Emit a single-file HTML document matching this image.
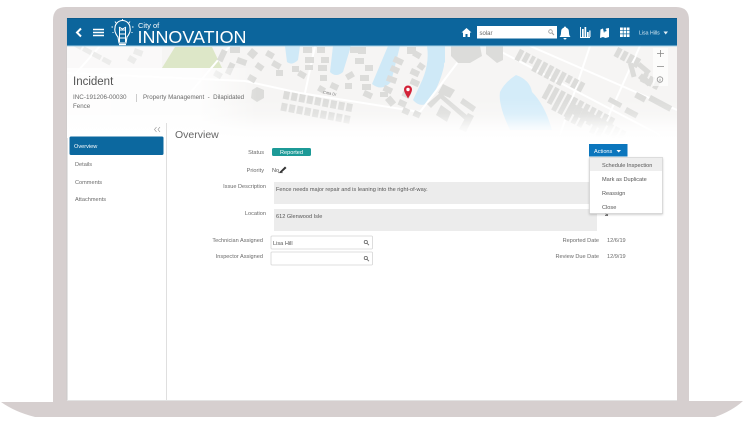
<!DOCTYPE html>
<html><head><meta charset="utf-8">
<style>
html,body{margin:0;padding:0;background:#fff}
#r{position:relative;width:743px;height:427px;overflow:hidden;background:#fff;font-family:"Liberation Sans",sans-serif;color:#6a6a6a}
#r div.t{position:absolute;font-size:5.6px;line-height:8px;margin-top:1px;white-space:nowrap;filter:blur(.3px)}
.ra{text-align:right;width:100px}
.box{position:absolute}
</style></head><body><div id="r">
<svg width="743" height="427" style="position:absolute;left:0;top:0;filter:blur(.3px)" xmlns="http://www.w3.org/2000/svg">
<defs>
<linearGradient id="fade" x1="0" y1="0" x2="0" y2="1"><stop offset="0" stop-color="#fff" stop-opacity="0"/><stop offset=".4" stop-color="#fff" stop-opacity=".2"/><stop offset=".75" stop-color="#fff" stop-opacity=".8"/><stop offset="1" stop-color="#fff"/></linearGradient>
<linearGradient id="lf" x1="0" y1="0" x2="1" y2="0"><stop offset="0" stop-color="#fff" stop-opacity=".85"/><stop offset=".7" stop-color="#fff" stop-opacity=".8"/><stop offset="1" stop-color="#fff" stop-opacity="0"/></linearGradient>
<clipPath id="sc"><rect x="67" y="46" width="610" height="92"/></clipPath>
</defs>
<!-- laptop -->
<path d="M1 402H53V20Q53 7 66 7H676Q689 7 689 20V401H743Q732 411 715 417H35Q15 412 1 402Z" fill="#d6cfcf"/>
<rect x="67" y="18" width="610" height="382" fill="#fff"/>
<rect x="66.500" y="18" width="1" height="382" fill="#c9c9c9"/>
<rect x="67" y="400" width="610" height="1" fill="#e3e3e3"/>
<!-- map -->
<g clip-path="url(#sc)">
<rect x="67" y="46" width="610" height="92" fill="#f6f5f4"/>
<path d="M175 47H212L222 68H162Z" fill="#dde7c8"/>
<g fill="#cfe9f7">
<path d="M285 46H300L298 60Q292 66 287 62Z"/>
<path d="M333 46H351L343 72Q336 78 330 72Z"/>
<path d="M388 46H400L391 82Q382 92 372 84Z"/>
<path d="M427 46H444V66Q440 85 428 103Q420 108 413 100L420 85Q430 65 427 46Z"/>
<path d="M516 75Q530 80 532 92Q545 105 552 130L510 130Q498 105 500 92Q505 82 516 75Z" fill="#d4ecf9"/>
<path d="M440 46H445V62L440 70Z"/>
</g>
<g stroke="#fff" stroke-width="2" fill="none">
<path d="M67 73L245 81L300 93L420 112M230 46L190 93M315 46L305 93M490 46L660 135M530 46L677 110M470 46L420 112M590 46L560 135M640 46L600 135M100 46L70 80"/>
</g>
<g fill="#dcdcda">
<g transform="rotate(28 90 55)"><rect x="70" y="50" width="9" height="5"/><rect x="81" y="50" width="9" height="5"/><rect x="92" y="50" width="9" height="5"/><rect x="103" y="50" width="9" height="5"/></g>
<rect x="130" y="55" width="8" height="6" transform="rotate(30 130 55)"/><rect x="135" y="48" width="9" height="6" transform="rotate(20 135 48)"/>
<rect x="222" y="49" width="6" height="12" transform="rotate(25 222 49)"/><rect x="230" y="62" width="6" height="12" transform="rotate(25 230 62)"/><rect x="216" y="70" width="8" height="6" transform="rotate(30 216 70)"/><rect x="230" y="47" width="10" height="6"/><rect x="238" y="57" width="10" height="6" transform="rotate(20 238 57)"/><rect x="252" y="48" width="8" height="8" transform="rotate(40 252 48)"/><rect x="258" y="62" width="8" height="6" transform="rotate(35 258 62)"/><rect x="250" y="74" width="8" height="6" transform="rotate(30 250 74)"/>
<rect x="268" y="50" width="8" height="6" transform="rotate(30 268 50)"/><rect x="274" y="60" width="9" height="6" transform="rotate(30 274 60)"/><rect x="276" y="70" width="7" height="6"/><rect x="292" y="66" width="7" height="6"/><rect x="300" y="70" width="8" height="6" transform="rotate(30 300 70)"/><rect x="303" y="47" width="9" height="6"/><rect x="305" y="57" width="9" height="6"/><rect x="305" y="65" width="8" height="5"/>
<rect x="317" y="47" width="8" height="6"/><rect x="321" y="57" width="8" height="6"/><rect x="318" y="65" width="9" height="6"/><rect x="320" y="75" width="7" height="6"/><rect x="320" y="85" width="7" height="6" transform="rotate(30 320 85)"/><rect x="332" y="82" width="8" height="6" transform="rotate(25 332 82)"/><rect x="345" y="83" width="7" height="6"/><rect x="345" y="75" width="8" height="6" transform="rotate(-30 345 75)"/><rect x="350" y="47" width="8" height="6"/><rect x="355" y="58" width="9" height="6"/><rect x="358" y="47" width="8" height="7"/><rect x="365" y="65" width="8" height="6"/>
<rect x="360" y="75" width="9" height="6"/><rect x="362" y="84" width="9" height="6"/><rect x="365" y="90" width="9" height="6" transform="rotate(25 365 90)"/><rect x="380" y="92" width="8" height="5"/><rect x="385" y="100" width="7" height="9" transform="rotate(-40 385 100)"/><rect x="407" y="47" width="9" height="7"/><rect x="395" y="56" width="10" height="6" transform="rotate(25 395 56)"/><rect x="392" y="65" width="9" height="6" transform="rotate(25 392 65)"/><rect x="388" y="75" width="10" height="6" transform="rotate(20 388 75)"/><rect x="385" y="85" width="9" height="6" transform="rotate(25 385 85)"/><rect x="415" y="50" width="8" height="6" transform="rotate(30 415 50)"/><rect x="420" y="62" width="7" height="6" transform="rotate(35 420 62)"/><rect x="412" y="68" width="9" height="6" transform="rotate(25 412 68)"/><rect x="412" y="78" width="9" height="6" transform="rotate(25 412 78)"/><rect x="404" y="90" width="8" height="6" transform="rotate(25 404 90)"/><rect x="400" y="99" width="8" height="6" transform="rotate(25 400 99)"/><rect x="404" y="107" width="7" height="6" transform="rotate(25 404 107)"/><rect x="415" y="110" width="7" height="6" transform="rotate(25 415 110)"/>
<path d="M257 87L264 90V98L257 102L251 98L252 90Z"/>
<g transform="rotate(11 285 92)"><rect x="284" y="91" width="6" height="8"/><rect x="292" y="91" width="6" height="8"/><rect x="300" y="91" width="6" height="8"/><rect x="308" y="91" width="6" height="8"/><rect x="316" y="91" width="6" height="8"/><rect x="324" y="91" width="6" height="8"/><rect x="332" y="91" width="6" height="8"/><rect x="340" y="91" width="6" height="8"/><rect x="348" y="91" width="6" height="8"/><rect x="284" y="103" width="6" height="8"/><rect x="292" y="103" width="6" height="8"/><rect x="300" y="103" width="6" height="8"/><rect x="308" y="103" width="6" height="8"/><rect x="316" y="103" width="6" height="8"/><rect x="324" y="103" width="6" height="8"/><rect x="332" y="103" width="6" height="8"/><rect x="340" y="103" width="6" height="8"/><rect x="348" y="103" width="6" height="8"/></g>
<path d="M451 46H480L482 56L470 63H458L451 56Z"/><path d="M486 46H503V60L497 63L486 54Z"/>
<path d="M443 84L455 90L450 98L438 93Z"/><path d="M427 104L441 92L444 95L431 108Z"/><path d="M440 98L443 95L468 116L465 120Z"/><path d="M463 98L476 107L473 112L460 103Z"/><path d="M441 105L451 112L447 122L436 115Z"/><path d="M468 113L474 116L466 132L459 129Z"/>
<g transform="rotate(28 510 57)"><rect x="515" y="45" width="5" height="12"/><rect x="522" y="45" width="5" height="10"/><rect x="529" y="45" width="4" height="8"/><rect x="535" y="45" width="5" height="14"/><rect x="542" y="45" width="5" height="14"/><rect x="549" y="45" width="5" height="14"/><rect x="556" y="45" width="5" height="14"/><rect x="563" y="45" width="5" height="14"/><rect x="570" y="45" width="5" height="8"/><rect x="577" y="45" width="5" height="10"/><rect x="584" y="45" width="5" height="10"/></g>
<g transform="rotate(28 520 85)"><rect x="545" y="70" width="5" height="16"/><rect x="552" y="70" width="5" height="18"/><rect x="559" y="70" width="5" height="22"/><rect x="566" y="70" width="5" height="22"/><rect x="573" y="70" width="5" height="22"/><rect x="580" y="70" width="5" height="16"/><rect x="587" y="70" width="5" height="16"/><rect x="594" y="70" width="5" height="16"/><rect x="601" y="70" width="5" height="16"/><rect x="608" y="70" width="5" height="16"/><rect x="615" y="70" width="5" height="10"/></g>
<g transform="rotate(28 560 110)"><rect x="568" y="98" width="5" height="18"/><rect x="575" y="98" width="5" height="18"/><rect x="582" y="98" width="5" height="18"/><rect x="589" y="98" width="5" height="12"/><rect x="596" y="98" width="5" height="18"/><rect x="603" y="98" width="5" height="18"/><rect x="610" y="98" width="5" height="12"/><rect x="617" y="98" width="5" height="12"/><rect x="624" y="98" width="5" height="12"/></g>
<g transform="rotate(28 600 60)"><rect x="610" y="40" width="5" height="10"/><rect x="617" y="40" width="5" height="10"/><rect x="624" y="40" width="5" height="10"/><rect x="631" y="40" width="5" height="10"/><rect x="645" y="50" width="5" height="10"/><rect x="652" y="50" width="5" height="10"/><rect x="659" y="50" width="5" height="10"/></g>
<rect x="610" y="97" width="14" height="5" transform="rotate(28 610 97)"/><rect x="627" y="107" width="13" height="6" transform="rotate(28 627 107)"/><rect x="637" y="92" width="11" height="6" transform="rotate(28 637 92)"/><rect x="651" y="95" width="24" height="6" transform="rotate(28 651 95)"/>
<rect x="628" y="64" width="5" height="14" transform="rotate(-15 628 64)"/><rect x="637" y="66" width="5" height="14" transform="rotate(-50 637 66)"/><rect x="638" y="78" width="6" height="13" transform="rotate(-50 638 78)"/>
</g>
<text x="323" y="93.500" font-family="Liberation Sans,sans-serif" font-size="4" fill="#777" transform="rotate(10 323 93)">Citta Dr</text>
<rect x="67" y="46" width="95" height="24" fill="#fff" opacity=".45"/>
<rect x="67" y="68" width="190" height="70" fill="url(#lf)"/>
<rect x="67" y="98" width="610" height="40" fill="url(#fade)"/>
<!-- pin -->
<path d="M408 85.500a4 4 0 0 1 4 4q0 2.500-3.200 7.500l-.8 1.500-.8-1.500q-3.200-5-3.200-7.500a4 4 0 0 1 4-4z" fill="#d32238"/><circle cx="408" cy="89.500" r="1.700" fill="#fff"/>
<!-- zoom controls -->
<rect x="653" y="48" width="15" height="38" fill="#fff" opacity=".65"/>
<path d="M657 53.500h7M660.500 50v7M657 66.500h7" stroke="#888" stroke-width=".8"/>
<circle cx="660" cy="79.500" r="2.800" fill="none" stroke="#888" stroke-width=".7"/><path d="M660 78.800v2.500M660 77.400v.6" stroke="#888" stroke-width=".7"/>
</g>
<!-- header -->
<rect x="67" y="18" width="610" height="28" fill="#0c659c"/>
<rect x="67" y="18" width="610" height="1" fill="#0a5a8c"/>
<rect x="67" y="45.500" width="610" height="1" fill="#a9d2e8"/>
<path d="M81 28.500L77 32.500L81 36.500" fill="none" stroke="#fff" stroke-width="2"/>
<path d="M93 29.500h11M93 32.500h11M93 35.500h11" stroke="#fff" stroke-width="1.500"/>
<!-- bulb logo -->
<g fill="none" stroke="#fff" stroke-width="1.100">
<path d="M118 37Q114 32 115 28A7.500 7.500 0 0 1 130 28Q131 32 127 37L126 43H119Z"/>
<path d="M119.500 27V42M125.500 27V42M119.500 30H125.500M119.500 34H125.500M119.500 38H125.500M119 27L122.500 29L126 27" stroke-width="1"/>
<path d="M119 44.500H126" stroke-width="1.300"/>
<path d="M122.500 19V20.500M115 21.500L116 23M130 21.500L129 23M111.500 27H113M132 27H133.500M112.500 32.500H113.500M131.500 32.500H132.500" stroke-width=".9"/>
</g>
<text x="138" y="28" font-family="Liberation Sans,sans-serif" font-size="7.500" fill="#fff">City of</text>
<text x="137.500" y="43" font-family="Liberation Sans,sans-serif" font-size="17.500" fill="#fff" textLength="109" lengthAdjust="spacingAndGlyphs">INNOVATION</text>
<!-- home -->
<path d="M461.500 32.500L466.500 28L471.500 32.500H470V37H467.500V34H465.500V37H463V32.500Z" fill="#fff"/>
<!-- search -->
<rect x="477" y="26" width="80" height="12.500" fill="#fff"/>
<text x="479.500" y="35" font-family="Liberation Sans,sans-serif" font-size="6" fill="#666">solar</text>
<circle cx="550.500" cy="31.500" r="1.800" fill="none" stroke="#999" stroke-width=".8"/><path d="M552 33L554 35" stroke="#999" stroke-width="1"/>
<!-- bell -->
<path d="M565 26.500a1 1 0 0 1 1 1q3 1 3 5q0 3 1.500 4.500h-11q1.500-1.500 1.500-4.500q0-4 3-5a1 1 0 0 1 1-1zM563.500 38h3a1.500 1.500 0 0 1-3 0z" fill="#fff"/>
<!-- bars -->
<path d="M580.500 27V37.500H590" fill="none" stroke="#fff" stroke-width=".9"/>
<path d="M582 29h1.700v8H582zM584.500 27h1.700v10h-1.700zM587 32h1.700v5H587zM589.300 30.500H590.500V37H589.300z" fill="#fff"/>
<!-- map icon -->
<path d="M600.500 29.500L603 28.500L604 33L606 28.500L609 28V37L605.500 38L603 37L600 38Z" fill="#fff"/><circle cx="605.500" cy="30.500" r="1" fill="#0c659c"/>
<!-- grid -->
<path d="M620 27.500h9.500v9.500H620z" fill="#fff"/><path d="M623.200 27.500V37M626.400 27.500V37M620 30.700H629.500M620 33.900H629.500" stroke="#0c659c" stroke-width=".7"/>
<text x="639" y="34.500" font-family="Liberation Sans,sans-serif" font-size="5.200" fill="#d7e8f2">Lisa Hills</text>
<path d="M663.500 31.500H668L665.700 34.500Z" fill="#e5f0f6"/>
<!-- sidebar -->
<rect x="166" y="123" width="1" height="277" fill="#dfdfdf"/>
<path d="M156.500 127L154.500 129.500L156.500 132M160 127L158 129.500L160 132" fill="none" stroke="#888" stroke-width=".6"/>
<rect x="69.500" y="136.500" width="94" height="18.500" rx="1.500" fill="#0c689f"/>
<!-- fields -->
<rect x="272" y="148" width="39" height="8" rx="1.500" fill="#1c9a97"/>
<path d="M280 171.500L285 166.500L286.500 168L281.500 172.500H279.500Z" fill="#333"/><path d="M278 172.800H283" stroke="#333" stroke-width=".5"/>
<rect x="274" y="182" width="323" height="22" fill="#ececec"/>
<rect x="274" y="209" width="323" height="22" fill="#ececec"/>
<rect x="271" y="236" width="101.500" height="13" rx="1" fill="#fff" stroke="#d5d5d5" stroke-width=".8"/>
<rect x="271" y="252" width="101.500" height="13" rx="1" fill="#fff" stroke="#d5d5d5" stroke-width=".8"/>
<g fill="none" stroke="#666" stroke-width=".8"><circle cx="365.800" cy="242" r="1.600"/><path d="M367 243.300L369 245.200"/><circle cx="365.800" cy="258" r="1.600"/><path d="M367 259.300L369 261.200"/></g>
<path d="M605 213.500l3 1.500M605 215.500h3" stroke="#555" stroke-width=".7"/>
<!-- actions -->
<rect x="589" y="144" width="38.500" height="12.500" fill="#0b76bd"/>
<path d="M616.500 150H621L618.700 152.500Z" fill="#fff"/>
<rect x="589.500" y="157.500" width="73" height="56" fill="#fff" stroke="#d0d0d0" stroke-width=".7" style="filter:drop-shadow(0 1px 1px rgba(0,0,0,.2))"/>
<rect x="590" y="158" width="72" height="13" fill="#eeeeee"/>
</svg>
<div class="t" style="left:73px;top:74px;font-size:11.500px;line-height:14px;color:#555">Incident</div>
<div class="t" style="left:73px;top:93px;font-size:6.300px">INC-191206-00030</div>
<div class="box" style="left:136px;top:94px;width:1px;height:8px;background:#ccc"></div>
<div class="t" style="left:143px;top:93px;font-size:6.200px">Property Management &nbsp;-&nbsp; Dilapidated</div>
<div class="t" style="left:73px;top:101.500px;font-size:6.200px">Fence</div>
<div class="t" style="left:74px;top:142px;color:#fff">Overview</div>
<div class="t" style="left:75px;top:159.500px">Details</div>
<div class="t" style="left:75px;top:177.500px">Comments</div>
<div class="t" style="left:75px;top:195px">Attachments</div>
<div class="t" style="left:175px;top:127.500px;font-size:10.500px;line-height:13px;color:#666">Overview</div>
<div class="t ra" style="left:164px;top:148px">Status</div>
<div class="t" style="left:272px;top:148px;width:39px;text-align:center;color:#fff">Reported</div>
<div class="t ra" style="left:164px;top:165.500px">Priority</div>
<div class="t" style="left:272px;top:165.500px;color:#555">No</div>
<div class="t ra" style="left:166px;top:182px">Issue Description</div>
<div class="t" style="left:276px;top:185px;color:#555">Fence needs major repair and is leaning into the right-of-way.</div>
<div class="t ra" style="left:166px;top:209px">Location</div>
<div class="t" style="left:276px;top:212px;color:#555">612 Glenwood Isle</div>
<div class="t ra" style="left:163px;top:236px">Technician Assigned</div>
<div class="t" style="left:273px;top:239px;color:#555">Lisa Hill</div>
<div class="t ra" style="left:163px;top:252px">Inspector Assigned</div>
<div class="t ra" style="left:499px;top:236px">Reported Date</div>
<div class="t" style="left:607px;top:236px">12/6/19</div>
<div class="t ra" style="left:499px;top:252px">Review Due Date</div>
<div class="t" style="left:607px;top:252px">12/9/19</div>
<div class="t" style="left:594px;top:146.500px;color:#fff">Actions</div>
<div class="t" style="left:602px;top:161px;color:#555">Schedule Inspection</div>
<div class="t" style="left:602px;top:175px;color:#555">Mark as Duplicate</div>
<div class="t" style="left:602px;top:189px;color:#555">Reassign</div>
<div class="t" style="left:602px;top:203px;color:#555">Close</div>
</div></body></html>
